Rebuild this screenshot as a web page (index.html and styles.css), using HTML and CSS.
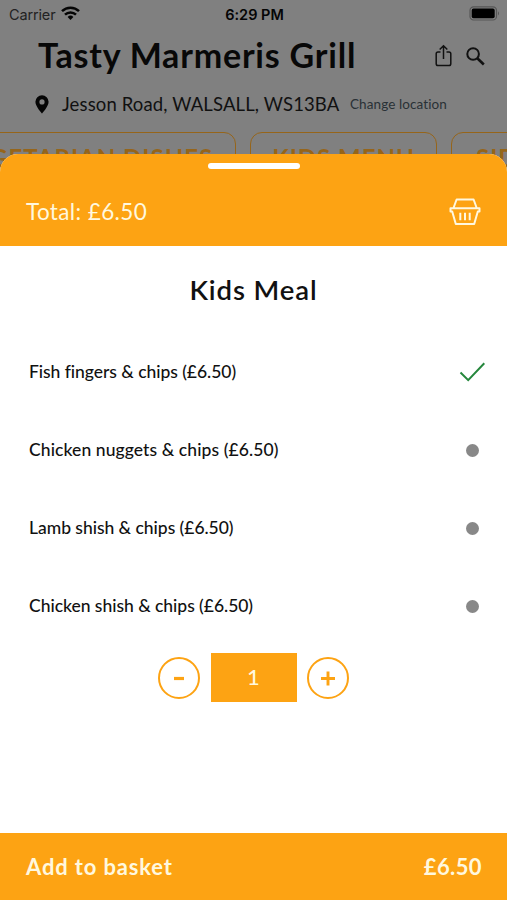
FILE: index.html
```html
<!DOCTYPE html>
<html lang="en">
<head>
<meta charset="utf-8">
<title>Kids Meal</title>
<link rel="stylesheet" href="styles.css">
</head>
<body>
<div class="phone">
  <div class="page">
    <div class="status">
      <div class="carrier"><span>Carrier</span>
        <svg width="19" height="15" viewBox="0 0 19 15" fill="none" stroke="#050505" stroke-width="2.5"><path d="M1 5.2a12.2 12.2 0 0 1 17 0"/><path d="M4 8.7a7.9 7.9 0 0 1 11 0"/><path d="M9.5 14 6.6 11a4.2 4.2 0 0 1 5.8 0z" fill="#050505" stroke="none"/></svg>
      </div>
      <div class="clock">6:29 PM</div>
      <svg class="battery" width="31" height="15" viewBox="0 0 31 15"><rect x="1" y=".8" width="26.5" height="13.2" rx="3.6" fill="none" stroke="#565656" stroke-width="1.2"/><rect x="2.7" y="2.6" width="23" height="9.6" rx="1.8" fill="#000"/><path d="M29 5.2q2 2.2 0 4.4z" fill="#565656"/></svg>
    </div>
    <div class="heading">
      <h1>Tasty Marmeris Grill</h1>
      <svg class="share" width="17" height="24" viewBox="0 0 17 24" fill="none" stroke="#111" stroke-width="1.5"><path d="M5.5 8H3Q1.2 8 1.2 9.8v9.9q0 1.8 1.8 1.8h11q1.8 0 1.8-1.8V9.8Q15.8 8 14 8h-2.5M8.5 15V2M4.7 5.5l3.8-3.8 3.8 3.8"/></svg>
      <svg class="search" width="19" height="19" viewBox="0 0 19 19" fill="none" stroke="#111"><circle cx="7.1" cy="7" r="5.8" stroke-width="2"/><path d="m11.3 11.2 6.5 6.3" stroke-width="2.6"/></svg>
    </div>
    <div class="address">
      <svg width="14" height="19" viewBox="0 0 14 19"><path fill="#050505" fill-rule="evenodd" d="M7 .2a6.6 6.6 0 0 0-6.600 6.600C.4 11.600 7 18.500 7 18.500s6.600-6.900 6.600-11.700A6.600 6.600 0 0 0 7 .2m0 4.100a2.600 2.600 0 1 1 0 5.200 2.600 2.600 0 0 1 0-5.200"/></svg>
      <span class="street">Jesson Road, WALSALL, WS13BA</span>
      <span class="change">Change location</span>
    </div>
    <div class="tabs">
      <div class="tab veg">VEGETARIAN DISHES</div>
      <div class="tab kids">KIDS MENU</div>
      <div class="tab sides">SIDES</div>
    </div>
  </div>
  <div class="sheet">
    <div class="total">
      <div class="handle"></div>
      <div class="total-row">
        <span class="sum">Total: £6.50</span>
        <svg width="32" height="28" viewBox="0 0 32 28" fill="none" stroke="#fff8df" stroke-width="2" stroke-linejoin="round"><path d="M4.500 10 7.600 1.500h17L27.700 10M1.500 10.200h29v3.200h-1.700L25.200 26H6.800L3.200 13.400H1.500zM11.300 14.800v7.500M16 14.800v7.500M20.700 14.800v7.500"/></svg>
      </div>
    </div>
    <h2>Kids Meal</h2>
    <div class="options">
      <div class="option"><span class="fish">Fish fingers &amp; chips (£6.50)</span>
        <svg width="26" height="20" viewBox="0 0 26 20" fill="none" stroke="#25873c" stroke-width="2"><path d="m1.500 10.500 7.700 7.600L25.300 1.300"/></svg></div>
      <div class="option"><span class="nuggets">Chicken nuggets &amp; chips (£6.50)</span><i class="dot"></i></div>
      <div class="option"><span>Lamb shish &amp; chips (£6.50)</span><i class="dot"></i></div>
      <div class="option"><span>Chicken shish &amp; chips (£6.50)</span><i class="dot"></i></div>
    </div>
    <div class="stepper">
      <svg width="42" height="42" viewBox="0 0 42 42" fill="none" stroke="#fda313"><circle cx="21" cy="21" r="20" stroke-width="2"/><path d="M16 21.500h10" stroke-width="3.200"/></svg>
      <div class="count">1</div>
      <svg width="42" height="42" viewBox="0 0 42 42" fill="none" stroke="#fda313"><circle cx="21" cy="21" r="20" stroke-width="2"/><path d="M14 21.500h14M21 14.500v14" stroke-width="2.900"/></svg>
    </div>
    <div class="footer"><span class="add">Add to basket</span><span class="price">£6.50</span></div>
  </div>
</div>
</body>
</html>
```
FILE: styles.css
```css
* { box-sizing: border-box; }
body { margin: 0; font-family: Lato, sans-serif; color: #111; font-variant-ligatures: none; }
h1, h2 { margin: 0; }
svg { display: block; flex: none; }
.phone { display: grid; width: 507px; height: 900px; overflow: hidden; background: #808080; }
.page, .sheet { grid-area: 1 / 1; min-width: 0; }
.page { overflow: hidden; white-space: nowrap; }
.status { display: grid; grid-template-columns: 1fr auto 1fr; height: 28px; align-items: center; font-family: Inter, sans-serif; padding: 0 7px 0 9px; }
.carrier { display: flex; gap: 6px; align-items: center; font-size: 14.5px; letter-spacing: -.15px; color: #222; }
.carrier svg { margin-top: -2px; }
.clock { font-size: 14.5px; font-weight: 600; color: #050505; }
.battery { justify-self: end; margin-top: -2px; }
.heading { display: flex; align-items: center; height: 56px; padding-left: 38px; }
h1 { width: 397px; font-size: 34px; line-height: 54px; height: 56px; font-weight: 700; color: #080808; letter-spacing: .8px; }
.search { margin-left: 14px; }
.address { display: flex; align-items: center; height: 40px; padding-left: 35px; }
.street { width: 288px; margin-left: 13px; font-size: 18.5px; letter-spacing: .13px; color: #111; }
.change { font-size: 13.5px; letter-spacing: .1px; color: #293136; }
.tabs { display: flex; gap: 14px; margin: 8px 0 0 -65px; }
.tab { flex: none; height: 60px; border: 1.5px solid #96651a; border-radius: 12px; text-align: center; font-size: 24px; line-height: 50px; font-weight: 700; letter-spacing: 1px; color: #96651a; }
.veg { width: 301px; }
.kids { width: 187px; }
.sides { width: 130px; padding-left: 24px; text-align: left; }
.sheet { display: flex; flex-direction: column; margin-top: 154px; background: #fff; border-radius: 18px 18px 0 0; overflow: hidden; }
.total { height: 92px; background: #fda313; }
.handle { width: 92px; height: 6px; margin: 9px auto 0; border-radius: 3px; background: #fff; }
.total-row { display: flex; justify-content: space-between; align-items: center; height: 56px; margin-top: 15px; padding: 0 26px; }
.sum { padding-bottom: 2px; font-size: 22.5px; letter-spacing: .38px; color: #fff8df; }
h2 { height: 87px; line-height: 88px; text-align: center; font-size: 27.5px; font-weight: 600; letter-spacing: .9px; }
.option { display: flex; height: 78px; align-items: center; justify-content: space-between; padding: 0 22px 0 29px; font-size: 17.5px; font-weight: 500; }
.option span { padding-bottom: 1px; letter-spacing: -.03px; }
.option .fish { letter-spacing: -.04px; }
.option .nuggets { letter-spacing: .09px; }
.dot { width: 13px; height: 13px; margin-right: 6px; border-radius: 50%; background: #888; }
.stepper { display: flex; justify-content: center; align-items: center; gap: 10.5px; height: 49px; margin-top: 8px; }
.count { width: 86px; height: 49px; background: #fda313; color: #fff8df; font-size: 22px; font-weight: 500; line-height: 48px; text-align: center; }
.footer { display: flex; align-items: center; justify-content: space-between; height: 67px; margin-top: auto; padding: 0 25px 1px 26px; background: #fda313; color: #fff8df; font-size: 22px; font-weight: 700; }
.add { letter-spacing: .85px; }
.price { letter-spacing: .4px; }
```
